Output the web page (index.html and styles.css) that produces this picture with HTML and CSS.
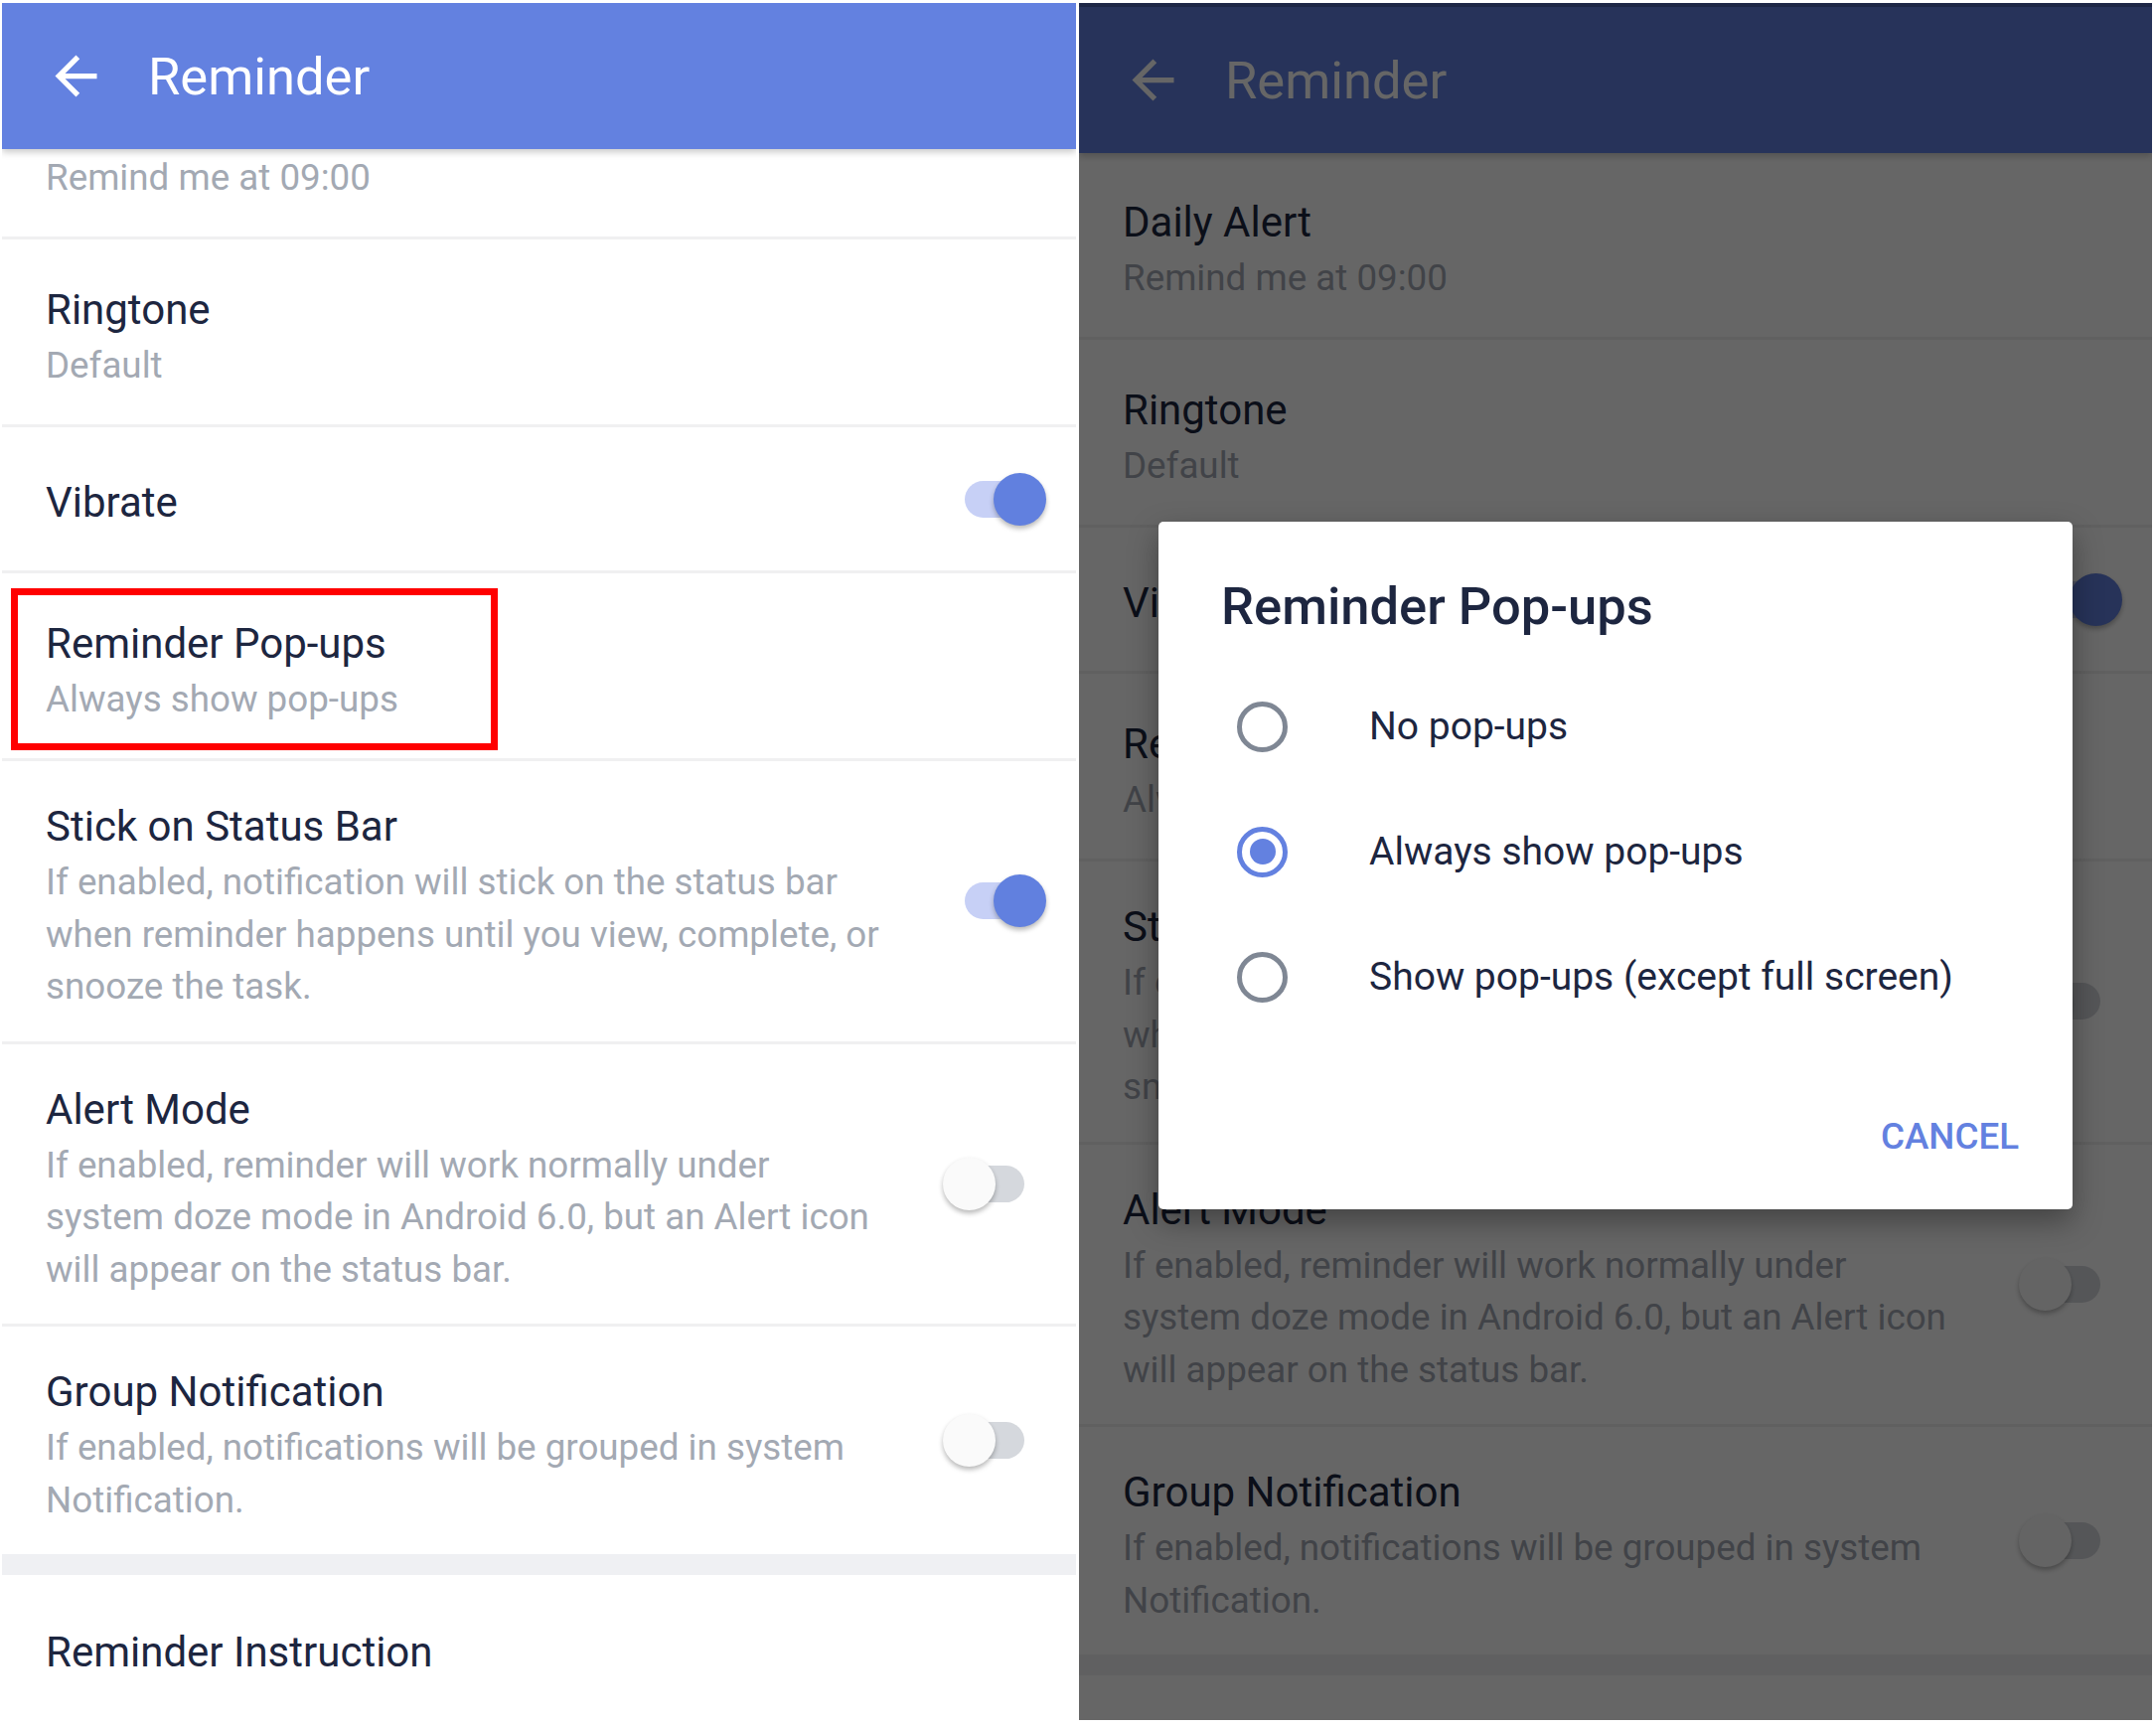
FILE: index.html
```html
<!DOCTYPE html>
<html lang="en">
<head>
<meta charset="utf-8">
<title>Reminder settings</title>
<link rel="stylesheet" href="styles.css">
</head>
<body>
<div class="screen">
  <section class="phone phone-left">
    <header class="appbar">
      <svg class="back" viewBox="0 0 24 24" width="63" height="63"><path d="M20 11H7.83l5.59-5.59L12 4l-8 8 8 8 1.41-1.41L7.83 13H20v-2z"/></svg>
      <h1 class="appbar-title">Reminder</h1>
    </header>
    <div class="viewport">
      <div class="list list-scrolled">
        <div class="row two">
          <div class="text"><div class="title">Daily Alert</div><div class="sub">Remind me at 09:00</div></div>
        </div>
        <div class="row two">
          <div class="text"><div class="title">Ringtone</div><div class="sub">Default</div></div>
        </div>
        <div class="row one">
          <div class="text"><div class="title">Vibrate</div></div>
          <span class="switch on"><span class="track"></span><span class="thumb"></span></span>
        </div>
        <div class="row two">
          <div class="text"><div class="title">Reminder Pop-ups</div><div class="sub">Always show pop-ups</div></div>
        </div>
        <div class="row">
          <div class="text"><div class="title">Stick on Status Bar</div><div class="sub">If enabled, notification will stick on the status bar when reminder happens until you view, complete, or snooze the task.</div></div>
          <span class="switch on"><span class="track"></span><span class="thumb"></span></span>
        </div>
        <div class="row">
          <div class="text"><div class="title">Alert Mode</div><div class="sub">If enabled, reminder will work normally under system doze mode in Android 6.0, but an Alert icon will appear on the status bar.</div></div>
          <span class="switch"><span class="track"></span><span class="thumb"></span></span>
        </div>
        <div class="row last">
          <div class="text"><div class="title">Group Notification</div><div class="sub">If enabled, notifications will be grouped in system Notification.</div></div>
          <span class="switch"><span class="track"></span><span class="thumb"></span></span>
        </div>
        <div class="band"></div>
        <div class="row one last">
          <div class="text"><div class="title">Reminder Instruction</div></div>
        </div>
      </div>
    </div>
    <div class="highlight"></div>
  </section>

  <section class="phone phone-right">
    <div class="statusbar"></div>
    <header class="appbar">
      <svg class="back" viewBox="0 0 24 24" width="63" height="63"><path d="M20 11H7.83l5.59-5.59L12 4l-8 8 8 8 1.41-1.41L7.83 13H20v-2z"/></svg>
      <h1 class="appbar-title">Reminder</h1>
    </header>
    <div class="viewport">
      <div class="list list-top">
        <div class="row two">
          <div class="text"><div class="title">Daily Alert</div><div class="sub">Remind me at 09:00</div></div>
        </div>
        <div class="row two">
          <div class="text"><div class="title">Ringtone</div><div class="sub">Default</div></div>
        </div>
        <div class="row one">
          <div class="text"><div class="title">Vibrate</div></div>
          <span class="switch on"><span class="track"></span><span class="thumb"></span></span>
        </div>
        <div class="row two">
          <div class="text"><div class="title">Reminder Pop-ups</div><div class="sub">Always show pop-ups</div></div>
        </div>
        <div class="row">
          <div class="text"><div class="title">Stick on Status Bar</div><div class="sub">If enabled, notification will stick on the status bar when reminder happens until you view, complete, or snooze the task.</div></div>
          <span class="switch"><span class="track"></span><span class="thumb"></span></span>
        </div>
        <div class="row">
          <div class="text"><div class="title">Alert Mode</div><div class="sub">If enabled, reminder will work normally under system doze mode in Android 6.0, but an Alert icon will appear on the status bar.</div></div>
          <span class="switch"><span class="track"></span><span class="thumb"></span></span>
        </div>
        <div class="row last">
          <div class="text"><div class="title">Group Notification</div><div class="sub">If enabled, notifications will be grouped in system Notification.</div></div>
          <span class="switch"><span class="track"></span><span class="thumb"></span></span>
        </div>
        <div class="band"></div>
        <div class="row one last">
          <div class="text"><div class="title">Reminder Instruction</div></div>
        </div>
      </div>
    </div>
    <div class="scrim">
      <div class="dialog">
        <h2 class="dialog-title">Reminder Pop-ups</h2>
        <div class="options">
          <div class="option"><span class="radio"></span><span class="option-label">No pop-ups</span></div>
          <div class="option"><span class="radio checked"></span><span class="option-label">Always show pop-ups</span></div>
          <div class="option"><span class="radio"></span><span class="option-label">Show pop-ups (except full screen)</span></div>
        </div>
        <div class="actions"><span class="btn">CANCEL</span></div>
      </div>
    </div>
  </section>
</div>
</body>
</html>
```

FILE: styles.css
```css
* { box-sizing: border-box; }

html, body {
  margin: 0;
  padding: 0;
  background: #ffffff;
}

body {
  width: 2170px;
  height: 1740px;
  overflow: hidden;
  font-family: Roboto, "Noto Sans", "Liberation Sans", sans-serif;
}

.screen {
  display: flex;
  gap: 3px;
  padding: 3px 4px 0 2px;
  height: 1740px;
}

.phone {
  position: relative;
  display: flex;
  flex-direction: column;
  overflow: hidden;
  background: #ffffff;
}

.phone-left {
  width: 1081px;
  height: 1737px;
}

.phone-right {
  width: 1080px;
  height: 1728px;
}

.statusbar {
  height: 4px;
  flex: none;
  background: #4d64b2;
}

.appbar {
  position: relative;
  z-index: 2;
  flex: none;
  height: 147px;
  display: flex;
  align-items: center;
  gap: 41px;
  padding-left: 43px;
  background: #6381e0;
  box-shadow: 0 3px 7px rgba(0, 0, 0, 0.22);
}

.back {
  flex: none;
  fill: #ffffff;
}

.appbar-title {
  margin: 0;
  color: #ffffff;
  font-size: 52.5px;
  font-weight: 400;
  line-height: 60px;
}

.viewport {
  position: relative;
  z-index: 1;
  flex: 1;
  overflow: hidden;
}

.list-scrolled {
  margin-top: -98px;
}

.list-top {
  margin-top: -1px;
}

.row {
  display: flex;
  align-items: center;
  gap: 48px;
  padding: 36px 30px 28px 44px;
  border-bottom: 3px solid #f0f0f1;
}

.row.two { min-height: 189px; }
.row.one { min-height: 147px; }
.row.last { border-bottom: none; }

.text {
  flex: 1;
  min-width: 0;
}

.title {
  color: #1d2640;
  font-size: 42px;
  line-height: 60px;
}

.sub {
  color: #a3a9b3;
  font-size: 36.75px;
  line-height: 52.5px;
}

.band {
  height: 21px;
  background: #eff0f3;
}

.switch {
  position: relative;
  flex: none;
  width: 104px;
  height: 53px;
  margin-top: -8px;
}

.track {
  position: absolute;
  left: 22px;
  top: 8px;
  width: 60px;
  height: 37px;
  border-radius: 18.5px;
  background: #d5d8dd;
}

.thumb {
  position: absolute;
  left: 0;
  top: 0;
  width: 53px;
  height: 53px;
  border-radius: 50%;
  background: #fafafa;
  box-shadow: 0 3px 5px rgba(0, 0, 0, 0.28);
}

.switch.on .track { background: #c7d0f6; }
.switch.on .thumb { left: 51px; background: #6180df; }

.highlight {
  position: absolute;
  z-index: 3;
  left: 9px;
  top: 589px;
  width: 490px;
  height: 163px;
  border: 7px solid #ff0000;
}

.scrim {
  position: absolute;
  z-index: 5;
  inset: 0;
  display: flex;
  align-items: center;
  justify-content: center;
  padding-top: 8px;
  background: rgba(0, 0, 0, 0.6);
}

.dialog {
  width: 920px;
  height: 692px;
  display: flex;
  flex-direction: column;
  padding-top: 55px;
  background: #ffffff;
  border-radius: 5px;
  box-shadow: 0 12px 30px rgba(0, 0, 0, 0.35);
}

.dialog-title {
  margin: 0;
  padding-left: 63px;
  color: #1d2640;
  font-size: 52.5px;
  font-weight: 500;
  line-height: 60px;
}

.options {
  margin-top: 28px;
}

.option {
  height: 126px;
  display: flex;
  align-items: center;
  gap: 82px;
  padding-left: 79px;
}

.radio {
  flex: none;
  width: 51px;
  height: 51px;
  border-radius: 50%;
  border: 5px solid #7f8794;
  display: flex;
  align-items: center;
  justify-content: center;
}

.radio.checked {
  border-color: #6381e0;
}

.radio.checked::after {
  content: "";
  width: 26px;
  height: 26px;
  border-radius: 50%;
  background: #6381e0;
}

.option-label {
  color: #1d2640;
  font-size: 39px;
}

.actions {
  margin-top: 50px;
  height: 94px;
  display: flex;
  align-items: center;
  justify-content: flex-end;
  padding-right: 54px;
}

.btn {
  color: #6381e0;
  font-size: 36.75px;
  font-weight: 500;
}
```
